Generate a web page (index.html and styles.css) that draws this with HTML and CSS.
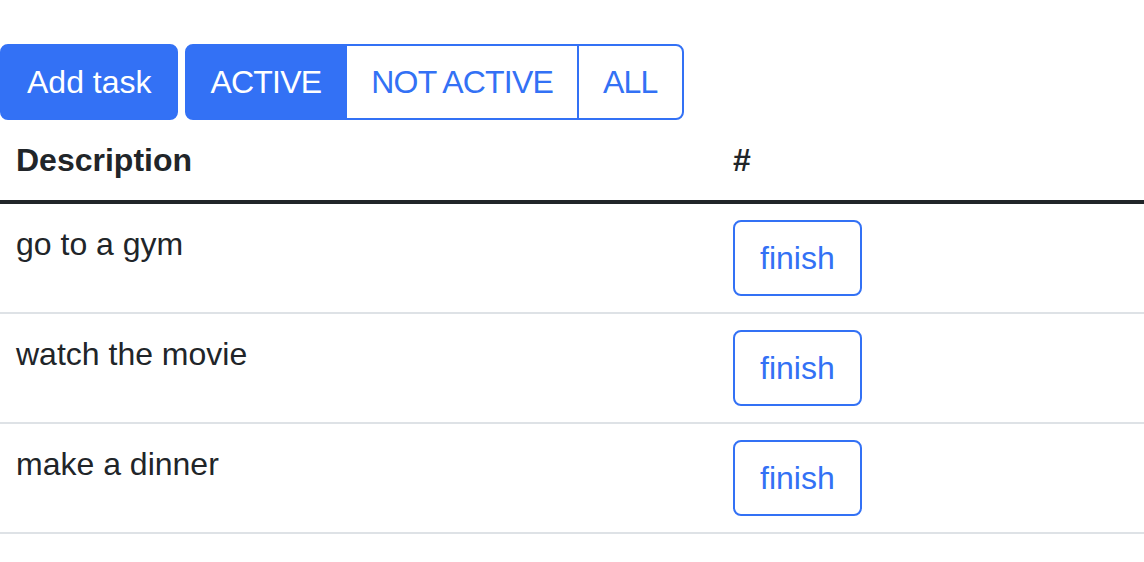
FILE: index.html
```html
<!DOCTYPE html>
<html lang="en">
<head>
<meta charset="utf-8">
<title>Tasks</title>
<link rel="stylesheet" href="styles.css">
</head>
<body>
<div class="toolbar">
  <button class="btn btn-primary">Add task</button>
  <div class="btn-group">
    <button class="btn group-btn active">ACTIVE</button>
    <button class="btn group-btn">NOT ACTIVE</button>
    <button class="btn group-btn">ALL</button>
  </div>
</div>
<table class="table">
  <thead>
    <tr><th class="col-desc">Description</th><th>#</th></tr>
  </thead>
  <tbody>
    <tr><td>go to a gym</td><td><button class="btn btn-outline">finish</button></td></tr>
    <tr><td>watch the movie</td><td><button class="btn btn-outline">finish</button></td></tr>
    <tr><td>make a dinner</td><td><button class="btn btn-outline">finish</button></td></tr>
  </tbody>
</table>
</body>
</html>
```
FILE: styles.css
```css
html, body {
  margin: 0;
  padding: 0;
  background: #ffffff;
  font-family: "Liberation Sans", Arial, sans-serif;
  font-size: 32px;
  line-height: 48px;
  color: #212529;
}
.toolbar {
  display: flex;
  gap: 7px;
  padding-top: 44px;
}
.btn {
  font-family: inherit;
  font-size: 32px;
  line-height: 48px;
  padding: 12px 24px;
  border: 2px solid #3371f5;
  border-radius: 8px;
  background: #ffffff;
  color: #3371f5;
  cursor: pointer;
  margin: 0;
}
.btn-primary {
  background: #3371f5;
  color: #ffffff;
  padding: 12px 24px 12px 25px;
}
.btn-group {
  display: flex;
}
.group-btn {
  border-radius: 0;
  padding: 12px 24px;
  letter-spacing: -0.8px;
}
.group-btn + .group-btn {
  margin-left: -2px;
}
.group-btn:first-child {
  border-radius: 8px 0 0 8px;
}
.group-btn:last-child {
  border-radius: 0 8px 8px 0;
}
.group-btn.active {
  background: #3371f5;
  color: #ffffff;
}
.table {
  width: 100%;
  border-collapse: collapse;
}
.table th, .table td {
  text-align: left;
  vertical-align: top;
  padding: 16px 16px;
}
.table th {
  font-weight: bold;
  border-bottom: 4px solid #212529;
}
.col-desc {
  width: 685px;
}
.table td {
  border-bottom: 2px solid #dee2e6;
}
.btn-outline {
  padding: 12px 25px;
}
```
